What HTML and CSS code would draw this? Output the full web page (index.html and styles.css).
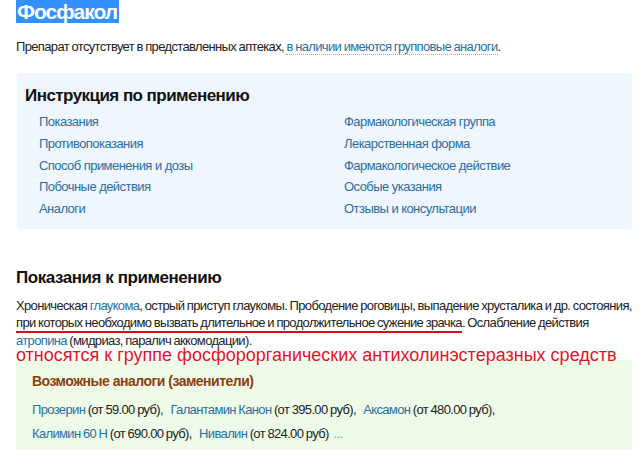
FILE: index.html
```html
<!DOCTYPE html>
<html lang="ru">
<head>
<meta charset="utf-8">
<link rel="stylesheet" href="styles.css">
</head>
<body>
<div class="page">
  <h1 class="title"><span class="sel">Фосфакол</span></h1>
  <p class="note">Препарат отсутствует в представленных аптеках, <a class="dotted" href="#">в наличии имеются групповые аналоги</a>.</p>

  <section class="toc">
    <h2 class="toc-title">Инструкция по применению</h2>
    <div class="toc-grid">
      <ul class="toc-col">
        <li><a href="#">Показания</a></li>
        <li><a href="#">Противопоказания</a></li>
        <li><a href="#">Способ применения и дозы</a></li>
        <li><a href="#">Побочные действия</a></li>
        <li><a href="#">Аналоги</a></li>
      </ul>
      <ul class="toc-col">
        <li><a href="#">Фармакологическая группа</a></li>
        <li><a href="#">Лекарственная форма</a></li>
        <li><a href="#">Фармакологическое действие</a></li>
        <li><a href="#">Особые указания</a></li>
        <li><a href="#">Отзывы и консультации</a></li>
      </ul>
    </div>
  </section>

  <h2 class="section-title">Показания к применению</h2>
  <div class="indications">
    <p class="text">Хроническая <a href="#">глаукома</a>, острый приступ глаукомы. Прободение роговицы, выпадение хрусталика и др. состояния, <span class="marked">при которых необходимо вызвать длительное и продолжительное сужение зрачка</span>. Ослабление действия <a href="#">атропина</a> (мидриаз, паралич аккомодации).</p>
    <div class="annotation">относятся к группе фосфорорганических антихолинэстеразных средств</div>
  </div>

  <section class="analogs">
    <h3 class="analogs-title">Возможные аналоги (заменители)</h3>
    <p class="analogs-list"><a href="#">Прозерин</a> (от 59.00 руб),&nbsp;&nbsp; <a href="#">Галантамин Канон</a> (от 395.00 руб),&nbsp;&nbsp; <a href="#">Аксамон</a> (от 480.00 руб),<br><a href="#">Калимин 60 Н</a> (от 690.00 руб),&nbsp;&nbsp; <a href="#">Нивалин</a> (от 824.00 руб)&nbsp; <a href="#" class="more">...</a></p>
  </section>
</div>
</body>
</html>
```

FILE: styles.css
```css
html, body {
  margin: 0;
  padding: 0;
  background: #ffffff;
}
body {
  font-family: "Liberation Sans", Arial, sans-serif;
  color: #222222;
}
.page {
  padding: 0 8px 0 16px;
  overflow: hidden;
  height: 450px;
}
a {
  color: #2a6fa3;
  text-decoration: none;
}
.title {
  margin: 1px 0 0 0;
  font-size: 21px;
  line-height: 21px;
  font-weight: bold;
  letter-spacing: -1px;
}
.sel {
  background: #3390ff;
  color: #ffffff;
  padding: 0 2px 0 1px;
}
.note {
  margin: 17px 0 0 0;
  font-size: 13px;
  line-height: 16px;
  letter-spacing: -0.65px;
  word-spacing: -0.5px;
}
.dotted {
  border-bottom: 1px dotted #8aaed0;
}
.toc {
  margin: 18px 0 0 1px;
  background: #eff6fd;
  border-radius: 4px;
  padding: 13px 10px 9px 8px;
}
.toc-title {
  margin: 0;
  font-size: 17px;
  line-height: 20px;
  font-weight: bold;
  color: #111111;
  letter-spacing: -0.55px;
}
.toc-grid {
  display: grid;
  grid-template-columns: 305px 1fr;
  padding: 5px 0 0 14px;
}
.toc-col {
  list-style: none;
  margin: 0;
  padding: 0;
}
.toc-col li {
  font-size: 13px;
  line-height: 21.75px;
  letter-spacing: -0.55px;
}
.section-title {
  margin: 39px 0 0 0;
  font-size: 17px;
  line-height: 20px;
  font-weight: bold;
  color: #111111;
  letter-spacing: -0.45px;
}
.indications {
  position: relative;
}
.text {
  margin: 9px 0 0 0;
  font-size: 13px;
  line-height: 17.5px;
  letter-spacing: -0.65px;
  word-spacing: -0.5px;
}
.marked {
  text-decoration: underline;
  text-decoration-color: #d0101b;
  text-decoration-thickness: 2px;
  text-underline-offset: 4px;
  text-decoration-skip-ink: none;
}
.annotation {
  position: absolute;
  left: 0;
  top: 49px;
  font-size: 18px;
  line-height: 19px;
  color: #e3141f;
  white-space: nowrap;
  letter-spacing: 0;
  z-index: 1;
}
.analogs {
  margin: 11px 0 0 0;
  background: #eefbe9;
  padding: 12px 16px 20px 16px;
}
.analogs-title {
  margin: 0;
  font-size: 14px;
  line-height: 18px;
  font-weight: bold;
  color: #8b3e0c;
  letter-spacing: -0.5px;
}
.analogs-list {
  margin: 8px 0 0 0;
  font-size: 13px;
  line-height: 24px;
  letter-spacing: -0.65px;
  word-spacing: -0.5px;
}
.more {
  color: #7a9ab8;
}
```
